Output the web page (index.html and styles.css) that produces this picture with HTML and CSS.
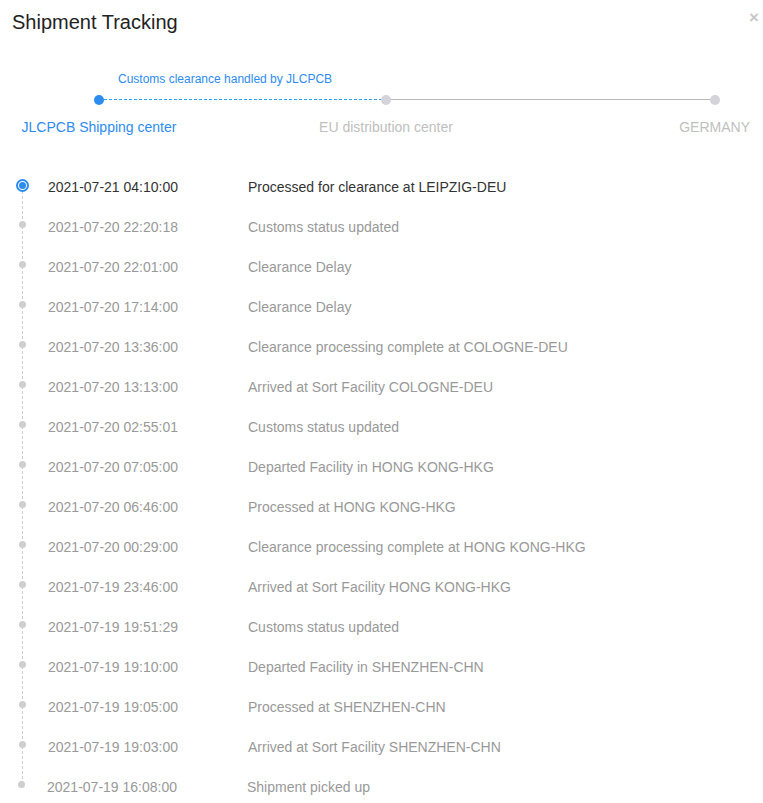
FILE: index.html
```html
<!DOCTYPE html>
<html>
<head>
<meta charset="utf-8">
<link rel="stylesheet" href="styles.css">
</head>
<body>
<div class="dialog">
  <div class="header">
    <div class="title">Shipment Tracking</div>
    <div class="close">×</div>
  </div>
  <div class="stepper">
    <div class="note">Customs clearance handled by JLCPCB</div>
    <div class="track">
      <span class="sdot active"></span>
      <span class="seg seg-dashed"></span>
      <span class="sdot"></span>
      <span class="seg seg-solid"></span>
      <span class="sdot"></span>
    </div>
    <div class="labels">
      <div class="lab lab-1 active">JLCPCB Shipping center</div>
      <div class="lab lab-2">EU distribution center</div>
      <div class="lab lab-3">GERMANY</div>
    </div>
  </div>
  <ul class="timeline">
    <li class="item current"><span class="mark"><span class="radio"></span></span><span class="time">2021-07-21 04:10:00</span><span class="desc">Processed for clearance at LEIPZIG-DEU</span></li>
    <li class="item"><span class="mark"><span class="dot"></span></span><span class="time">2021-07-20 22:20:18</span><span class="desc">Customs status updated</span></li>
    <li class="item"><span class="mark"><span class="dot"></span></span><span class="time">2021-07-20 22:01:00</span><span class="desc">Clearance Delay</span></li>
    <li class="item"><span class="mark"><span class="dot"></span></span><span class="time">2021-07-20 17:14:00</span><span class="desc">Clearance Delay</span></li>
    <li class="item"><span class="mark"><span class="dot"></span></span><span class="time">2021-07-20 13:36:00</span><span class="desc">Clearance processing complete at COLOGNE-DEU</span></li>
    <li class="item"><span class="mark"><span class="dot"></span></span><span class="time">2021-07-20 13:13:00</span><span class="desc">Arrived at Sort Facility COLOGNE-DEU</span></li>
    <li class="item"><span class="mark"><span class="dot"></span></span><span class="time">2021-07-20 02:55:01</span><span class="desc">Customs status updated</span></li>
    <li class="item"><span class="mark"><span class="dot"></span></span><span class="time">2021-07-20 07:05:00</span><span class="desc">Departed Facility in HONG KONG-HKG</span></li>
    <li class="item"><span class="mark"><span class="dot"></span></span><span class="time">2021-07-20 06:46:00</span><span class="desc">Processed at HONG KONG-HKG</span></li>
    <li class="item"><span class="mark"><span class="dot"></span></span><span class="time">2021-07-20 00:29:00</span><span class="desc">Clearance processing complete at HONG KONG-HKG</span></li>
    <li class="item"><span class="mark"><span class="dot"></span></span><span class="time">2021-07-19 23:46:00</span><span class="desc">Arrived at Sort Facility HONG KONG-HKG</span></li>
    <li class="item"><span class="mark"><span class="dot"></span></span><span class="time">2021-07-19 19:51:29</span><span class="desc">Customs status updated</span></li>
    <li class="item"><span class="mark"><span class="dot"></span></span><span class="time">2021-07-19 19:10:00</span><span class="desc">Departed Facility in SHENZHEN-CHN</span></li>
    <li class="item"><span class="mark"><span class="dot"></span></span><span class="time">2021-07-19 19:05:00</span><span class="desc">Processed at SHENZHEN-CHN</span></li>
    <li class="item"><span class="mark"><span class="dot"></span></span><span class="time">2021-07-19 19:03:00</span><span class="desc">Arrived at Sort Facility SHENZHEN-CHN</span></li>
    <li class="item last"><span class="mark"><span class="dot"></span></span><span class="time">2021-07-19 16:08:00</span><span class="desc">Shipment picked up</span></li>
  </ul>
</div>
</body>
</html>
```
FILE: styles.css
```css
html, body {
  margin: 0;
  padding: 0;
  background: #fff;
}
body {
  font-family: "Liberation Sans", Arial, sans-serif;
  color: #333;
}
.dialog {
  width: 763px;
  height: 803px;
  overflow: hidden;
}
.header {
  height: 60px;
  display: flex;
  justify-content: space-between;
  align-items: flex-start;
}
.title {
  font-size: 20px;
  line-height: 28px;
  padding: 8px 0 0 12px;
  color: #222;
}
.close {
  font-size: 17px;
  line-height: 20px;
  padding: 8px 0 0 0;
  color: #c8c8c8;
  font-weight: bold;
  width: 10px;
  margin-right: 4px;
}
.stepper {
  padding-top: 10px;
}
.note {
  font-size: 12px;
  line-height: 18px;
  color: #2d8cf0;
  padding-left: 118px;
}
.track {
  display: flex;
  align-items: flex-start;
  height: 10px;
  margin-top: 7px;
  padding-left: 94px;
}
.sdot {
  width: 10px;
  height: 10px;
  border-radius: 50%;
  background: #d3d3d9;
  flex: none;
}
.sdot.active {
  background: #2d8cf0;
}
.seg {
  height: 1px;
  flex: none;
  margin-top: 4px;
}
.seg-dashed {
  width: 277px;
  background: repeating-linear-gradient(to right, #26a2ff 0, #26a2ff 3px, #ffffff 3px, #ffffff 5px);
}
.seg-solid {
  width: 319px;
  background: #b8b8b8;
}
.labels {
  display: flex;
  margin-top: 12px;
  font-size: 14px;
  line-height: 20px;
  color: #c0c0c0;
}
.lab-1 {
  width: 198px;
  text-align: center;
}
.lab-1.active {
  color: #2d8cf0;
}
.lab-2 {
  width: 200px;
  margin-left: 88px;
  text-align: center;
}
.lab-3 {
  margin-left: auto;
  padding-right: 13px;
}
.timeline {
  list-style: none;
  margin: 30px 0 0 0;
  padding: 0;
  position: relative;
}
.timeline::before {
  content: "";
  position: absolute;
  left: 22px;
  top: 24px;
  height: 593px;
  border-left: 1px dashed #cfcfcf;
}
.item {
  display: flex;
  align-items: center;
  height: 40px;
  font-size: 14px;
  line-height: 40px;
  color: #999;
  position: relative;
}
.mark {
  width: 48px;
  flex: none;
  display: flex;
  justify-content: flex-start;
  align-items: center;
  height: 40px;
}
.dot {
  width: 7px;
  height: 7px;
  border-radius: 50%;
  background: #cfcfd3;
  margin-left: 19px;
  margin-top: -5px;
}
.radio {
  width: 9px;
  height: 9px;
  border-radius: 50%;
  border: 2px solid #2d8cf0;
  background: #fff;
  margin-left: 16px;
  margin-top: -4px;
  display: flex;
  align-items: center;
  justify-content: center;
}
.radio::after {
  content: "";
  width: 7px;
  height: 7px;
  border-radius: 50%;
  background: #2d8cf0;
}
.time {
  width: 200px;
  flex: none;
}
.current .time,
.current .desc {
  color: #333;
}
.item.last {
  margin-left: -1px;
}
```
